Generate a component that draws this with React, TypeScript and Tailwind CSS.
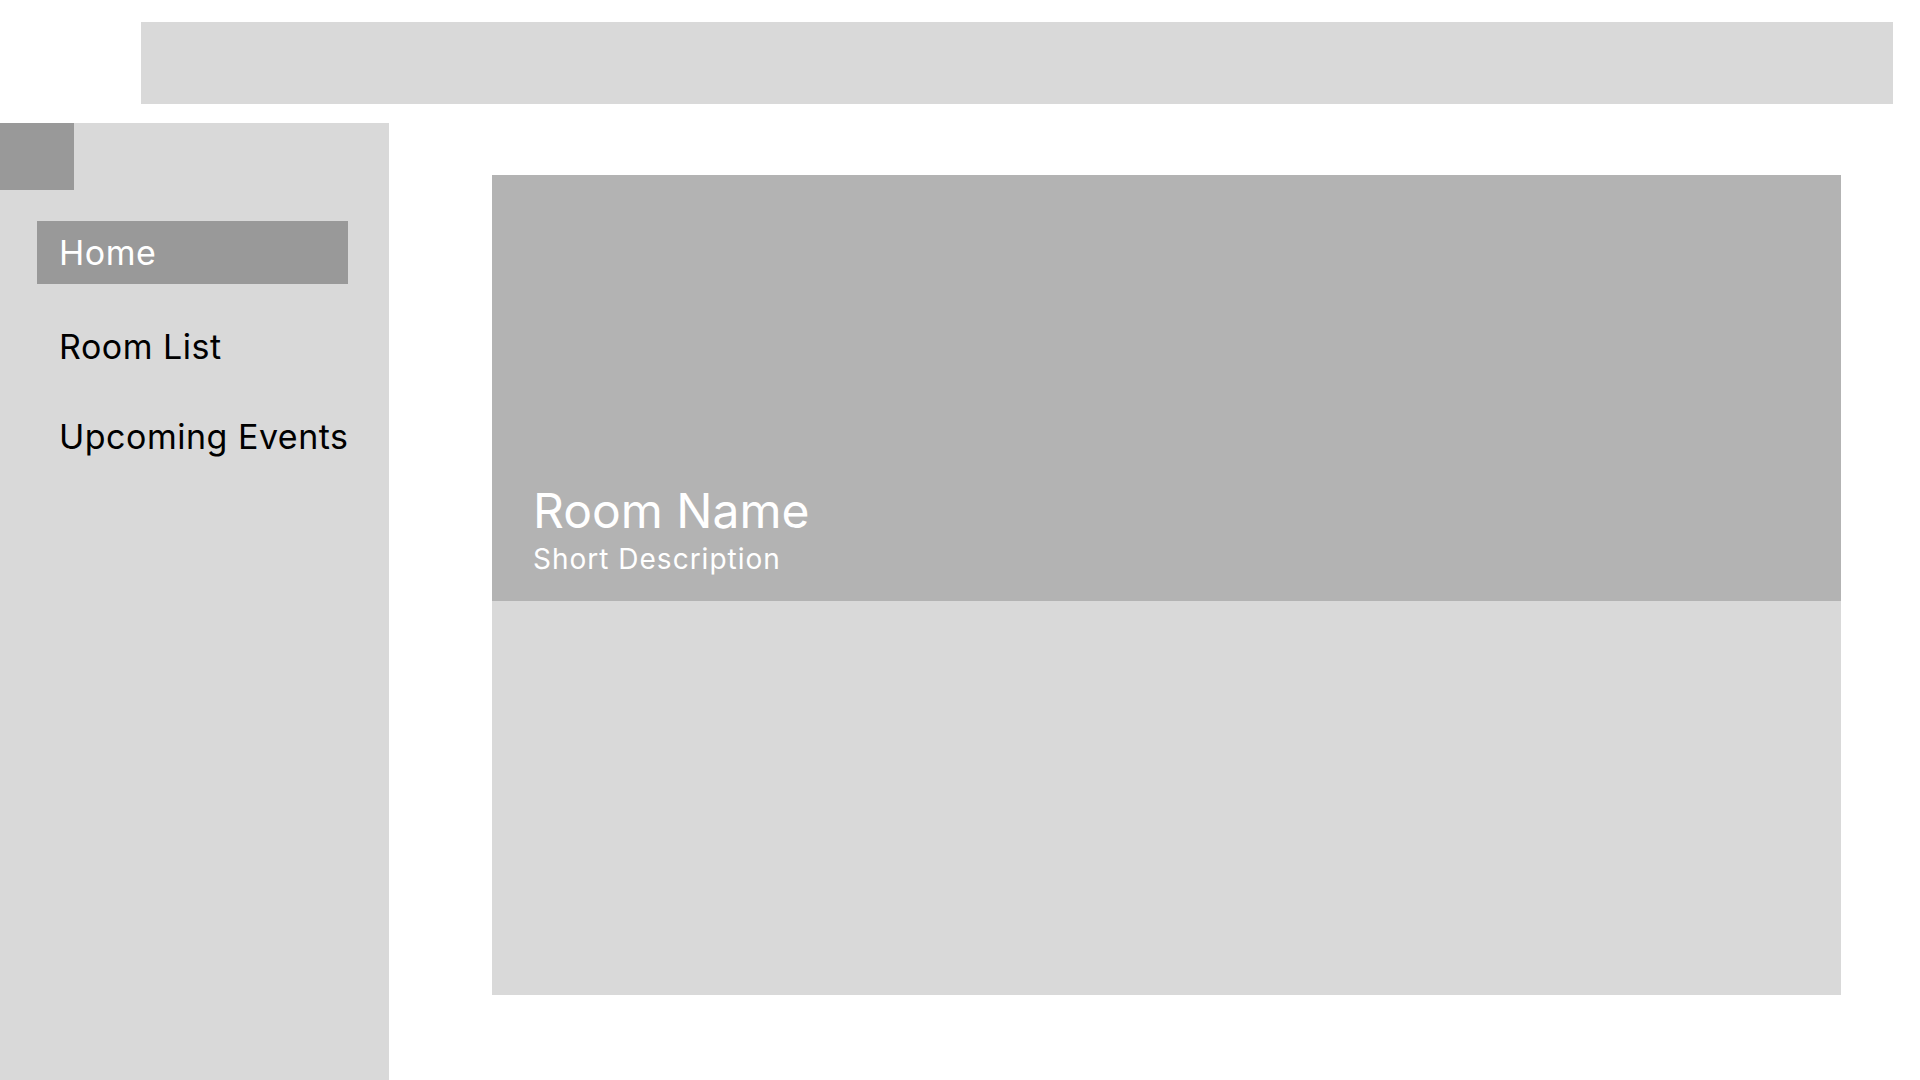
export default function App() {
  return (
    <div className="w-[1920px] h-[1080px] bg-white overflow-hidden flex flex-col" style={{ fontFamily: "Inter, 'Noto Sans', sans-serif" }}>
      <div className="ml-[141px] mt-[22px] w-[1752px] h-[82px] bg-[#d9d9d9] shrink-0" />
      <div className="mt-[19px] flex flex-1">
        <aside className="w-[389px] h-[957px] bg-[#d9d9d9] flex flex-col shrink-0">
          <div className="w-[74px] h-[67px] bg-[#999999]" />
          <nav className="flex flex-col ml-[37px] mt-[31px] w-[311px]">
            <div className="h-[63px] flex items-center pl-[22px] bg-[#999999] text-white text-[34px] tracking-[0.5px]">Home</div>
            <div className="mt-[31px] h-[63px] flex items-center pl-[22px] text-black text-[34px] tracking-[0.5px]">Room List</div>
            <div className="mt-[27px] h-[63px] flex items-center pl-[22px] text-black text-[34px] tracking-[0.5px] whitespace-nowrap">Upcoming Events</div>
          </nav>
        </aside>
        <main className="pl-[103px] pt-[52px]">
          <div className="w-[1349px] flex flex-col">
            <div className="h-[426px] bg-[#b3b3b3] flex flex-col justify-end pl-[41px] pb-[25px] text-white">
              <div className="text-[48px] leading-[58px]">Room Name</div>
              <div className="mt-[2px] text-[28px] leading-[34px] tracking-[1px]">Short Description</div>
            </div>
            <div className="h-[394px] bg-[#d9d9d9]" />
          </div>
        </main>
      </div>
    </div>
  );
}
